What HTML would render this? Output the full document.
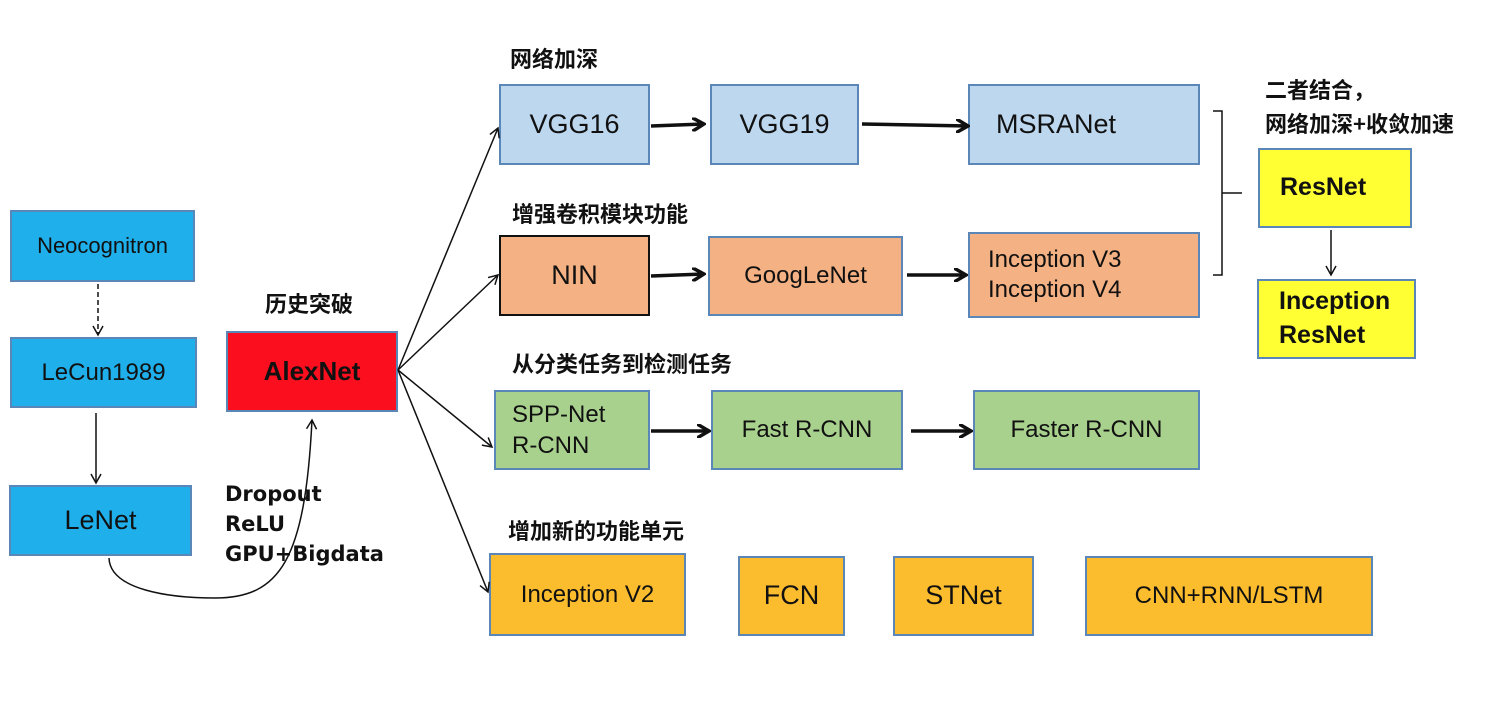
<!DOCTYPE html><html><head><meta charset="utf-8"><style>
body{margin:0;width:1500px;height:710px;background:#fff;position:relative;overflow:hidden;font-family:"Liberation Sans","Noto Sans CJK SC",sans-serif}
.b{position:absolute;box-sizing:border-box;border:2px solid #5b86b8;display:flex;align-items:center;justify-content:center;font-size:27px;color:#111;line-height:1.25}
.l{position:absolute;font-size:22px;font-weight:bold;color:#111;white-space:nowrap;font-family:"Noto Sans CJK SC",sans-serif}
.bl{background:#1fb0ec}.lb{background:#bdd7ee}.or{background:#f4b183}.gr{background:#a9d18e}.ye{background:#fbbd2e}.yl{background:#ffff33;font-weight:bold}
</style></head><body>
<div class="b bl" style="left:10px;top:210px;width:185px;height:72px;font-size:22px">Neocognitron</div>
<div class="b bl" style="left:10px;top:337px;width:187px;height:71px;font-size:24px">LeCun1989</div>
<div class="b bl" style="left:9px;top:485px;width:183px;height:71px;font-size:27px">LeNet</div>
<div class="b" style="left:226px;top:331px;width:172px;height:81px;background:#fb0f1e;font-weight:bold;font-size:26px">AlexNet</div>
<div class="l" style="left:265px;top:287px">历史突破</div>
<div class="l" style="left:225px;top:479px;font-family:'DejaVu Sans',sans-serif;font-size:21px;line-height:30px">Dropout<br>ReLU<br>GPU+Bigdata</div>
<div class="l" style="left:510px;top:42px">网络加深</div>
<div class="l" style="left:512px;top:197px">增强卷积模块功能</div>
<div class="l" style="left:512px;top:347px">从分类任务到检测任务</div>
<div class="l" style="left:508px;top:514px">增加新的功能单元</div>
<div class="l" style="left:1265px;top:73px">二者结合，</div>
<div class="l" style="left:1265px;top:107px">网络加深+收敛加速</div>
<div class="b lb" style="left:499px;top:84px;width:151px;height:81px">VGG16</div>
<div class="b lb" style="left:710px;top:84px;width:149px;height:81px">VGG19</div>
<div class="b lb" style="left:968px;top:84px;width:232px;height:81px;justify-content:flex-start;padding-left:26px">MSRANet</div>
<div class="b or" style="left:499px;top:235px;width:151px;height:81px;border-color:#111">NIN</div>
<div class="b or" style="left:708px;top:236px;width:195px;height:80px;font-size:24px">GoogLeNet</div>
<div class="b or" style="left:968px;top:232px;width:232px;height:86px;font-size:24px;justify-content:flex-start;padding-left:18px">Inception V3<br>Inception V4</div>
<div class="b gr" style="left:494px;top:390px;width:156px;height:80px;font-size:24px;justify-content:flex-start;padding-left:16px;line-height:1.3">SPP-Net<br>R-CNN</div>
<div class="b gr" style="left:711px;top:390px;width:192px;height:80px;font-size:24px">Fast R-CNN</div>
<div class="b gr" style="left:973px;top:390px;width:227px;height:80px;font-size:24px">Faster R-CNN</div>
<div class="b ye" style="left:489px;top:553px;width:197px;height:83px;font-size:24px">Inception V2</div>
<div class="b ye" style="left:738px;top:556px;width:107px;height:80px">FCN</div>
<div class="b ye" style="left:893px;top:556px;width:141px;height:80px">STNet</div>
<div class="b ye" style="left:1085px;top:556px;width:288px;height:80px;font-size:24px">CNN+RNN/LSTM</div>
<div class="b yl" style="left:1258px;top:148px;width:154px;height:80px;font-size:25px;justify-content:flex-start;padding-left:20px">ResNet</div>
<div class="b yl" style="left:1257px;top:279px;width:159px;height:80px;font-size:25px;justify-content:flex-start;padding-left:20px;line-height:1.35">Inception<br>ResNet</div>
<svg width="1500" height="710" style="position:absolute;left:0;top:0" fill="none" stroke="#111">
<defs><marker id="a" markerWidth="12" markerHeight="12" refX="10" refY="6" orient="auto" markerUnits="userSpaceOnUse"><path d="M1,1 L10,6 L1,11" stroke="#111" stroke-width="1.5" fill="none"/></marker>
<marker id="t" markerWidth="14" markerHeight="14" refX="12" refY="7" orient="auto" markerUnits="userSpaceOnUse"><path d="M0,0 L12,7 L0,14" fill="none" stroke="#111" stroke-width="3.5"/></marker></defs>
<g stroke-width="1.5">
<path d="M98,284 V335" stroke-dasharray="5,3" marker-end="url(#a)"/>
<path d="M96,413 V483" marker-end="url(#a)"/>
<path d="M109,558 C110,590 170,598 215,598 C280,598 305,560 312,420" marker-end="url(#a)"/>
<path d="M398,370 L498,128" marker-end="url(#a)"/>
<path d="M398,370 L498,275" marker-end="url(#a)"/>
<path d="M398,370 L492,447" marker-end="url(#a)"/>
<path d="M398,370 L488,592" marker-end="url(#a)"/>
<path d="M1331,230 V275" marker-end="url(#a)"/>
<path d="M1213,111 H1222 V275 H1213 M1222,193 H1242"/>
</g>
<g stroke-width="3.5">
<path d="M651,126 L704,124" marker-end="url(#t)"/>
<path d="M862,124 L968,126" marker-end="url(#t)"/>
<path d="M651,276 L704,274" marker-end="url(#t)"/>
<path d="M907,275 L966,275" marker-end="url(#t)"/>
<path d="M651,431 L709,431" marker-end="url(#t)"/>
<path d="M911,431 L971,431" marker-end="url(#t)"/>
</g></svg>
</body></html>
